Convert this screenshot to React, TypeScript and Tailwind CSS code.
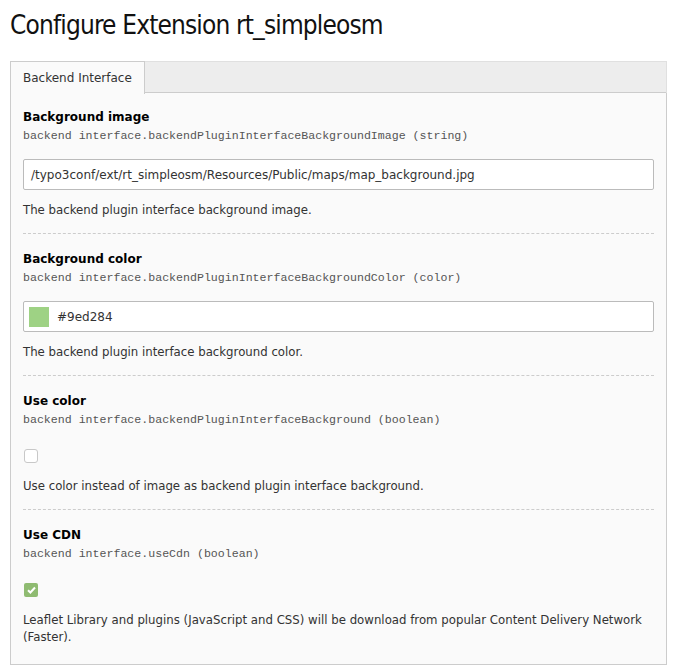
import React from 'react';

type Field = {
  label: string;
  path: string;
  kind: 'text' | 'color' | 'check';
  value?: string;
  checked?: boolean;
  help: string;
};

const fields: Field[] = [
  {
    label: 'Background image',
    path: 'backend interface.backendPluginInterfaceBackgroundImage (string)',
    kind: 'text',
    value: '/typo3conf/ext/rt_simpleosm/Resources/Public/maps/map_background.jpg',
    help: 'The backend plugin interface background image.',
  },
  {
    label: 'Background color',
    path: 'backend interface.backendPluginInterfaceBackgroundColor (color)',
    kind: 'color',
    value: '#9ed284',
    help: 'The backend plugin interface background color.',
  },
  {
    label: 'Use color',
    path: 'backend interface.backendPluginInterfaceBackground (boolean)',
    kind: 'check',
    checked: false,
    help: 'Use color instead of image as backend plugin interface background.',
  },
  {
    label: 'Use CDN',
    path: 'backend interface.useCdn (boolean)',
    kind: 'check',
    checked: true,
    help: 'Leaflet Library and plugins (JavaScript and CSS) will be download from popular Content Delivery Network (Faster).',
  },
];

const FieldRow = ({ f, last, first }: { f: Field; last: boolean; first: boolean }) => (
  <div className={`${first ? 'pt-[15px]' : 'pt-[16px]'} ${last ? 'pb-[18px]' : 'pb-[14px] border-b border-dashed border-[#cccccc]'}`}>
    <div className="text-[12px] leading-[18px] font-bold text-black">{f.label}</div>
    <div className="mt-[1px] font-['Liberation_Mono',monospace] text-[11.6px] leading-[18px] text-[#555]">{f.path}</div>

    {f.kind === 'text' && (
      <div className="mt-[14px] h-[31px] bg-white border border-[#bbbbbb] rounded-[2px] flex items-center px-[7px] text-[12px] text-[#333]">
        {f.value}
      </div>
    )}
    {f.kind === 'color' && (
      <div className="mt-[14px] h-[31px] bg-white border border-[#bbbbbb] rounded-[2px] flex items-center px-[5px] gap-[8px] text-[12px] text-[#333]">
        <span className="w-[20px] h-[20px] bg-[#9ed284]" />
        {f.value}
      </div>
    )}
    {f.kind === 'check' && (
      <div className="mt-[17px] h-[20px] flex items-center pl-[1px]">
        {f.checked ? (
          <span className="w-[14px] h-[14px] rounded-[2px] bg-[#8fbb71] flex items-center justify-center">
            <svg width="9" height="8" viewBox="0 0 9 8">
              <path d="M1 4.2 L3.4 6.5 L8 1.5" stroke="white" strokeWidth="2" fill="none" />
            </svg>
          </span>
        ) : (
          <span className="w-[14px] h-[14px] rounded-[3px] bg-white border border-[#c8c8c8]" />
        )}
      </div>
    )}

    <div className="mt-[12px] text-[11.75px] leading-[17px] text-[#333]">{f.help}</div>
  </div>
);

export default function App() {
  return (
    <div className="bg-white min-h-[669px] font-['DejaVu_Sans',Verdana,sans-serif] px-[10px] pt-[8px]">
      <h1 className="font-['DejaVu_Sans_Condensed','DejaVu_Sans',sans-serif] tracking-[-0.85px] text-[26px] leading-[34px] text-[#111] font-normal">
        Configure Extension rt_simpleosm
      </h1>

      <div className="mt-[19px] w-[657px]">
        <div className="flex bg-[#ededed] border-t border-r border-[#e0e0e0] h-[32px]">
          <div className="bg-[#fafafa] border border-b-0 border-[#cccccc] px-[12px] flex items-center text-[12px] text-[#333] h-[33px] -mt-px">
            Backend Interface
          </div>
          <div className="flex-1 border-b border-[#cccccc]" />
        </div>
        <div className="bg-[#fafafa] border border-t-0 border-[#cccccc] px-[12px]">
          {fields.map((f, i) => (
            <FieldRow key={f.label} f={f} first={i === 0} last={i === fields.length - 1} />
          ))}
        </div>
      </div>
    </div>
  );
}
